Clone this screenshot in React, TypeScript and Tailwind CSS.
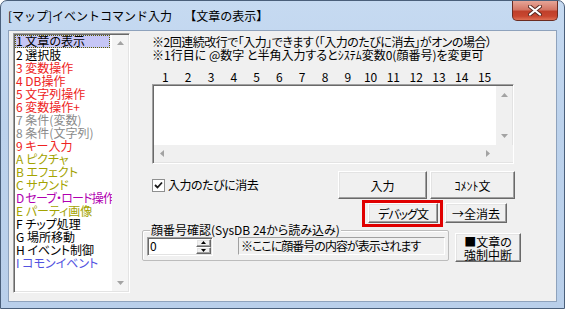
import React from "react";

const RED = "#ee2222";
const GRAY = "#8a8a8a";
const OLIVE = "#a3a300";
const PURPLE = "#b000b0";
const BLUE = "#5353df";

const items: [string, string][] = [
  ["1 文章の表示", "#000"],
  ["2 選択肢", "#000"],
  ["3 変数操作", RED],
  ["4 DB操作", RED],
  ["5 文字列操作", RED],
  ["6 変数操作+", RED],
  ["7 条件(変数)", GRAY],
  ["8 条件(文字列)", GRAY],
  ["9 キー入力", RED],
  ["A ピクチャ", OLIVE],
  ["B エフェクト", OLIVE],
  ["C サウンド", OLIVE],
  ["D セーブ・ロード操作", PURPLE],
  ["E パーティ画像", OLIVE],
  ["F チップ処理", "#000"],
  ["G 場所移動", "#000"],
  ["H イベント制御", "#000"],
  ["I コモンイベント", BLUE],
];

const Up = () => (
  <svg width="7" height="4" viewBox="0 0 7 4">
    <path d="M0 4 L3.5 0 L7 4 Z" fill="#a3a3a3" />
  </svg>
);
const Down = () => (
  <svg width="7" height="4" viewBox="0 0 7 4">
    <path d="M0 0 L3.5 4 L7 0 Z" fill="#a3a3a3" />
  </svg>
);
const Left = () => (
  <svg width="4" height="7" viewBox="0 0 4 7">
    <path d="M4 0 L0 3.5 L4 7 Z" fill="#a3a3a3" />
  </svg>
);
const Right = () => (
  <svg width="4" height="7" viewBox="0 0 4 7">
    <path d="M0 0 L4 3.5 L0 7 Z" fill="#a3a3a3" />
  </svg>
);

const sunken =
  "border border-t-[#a0a0a0] border-l-[#a0a0a0] border-r-[#ffffff] border-b-[#ffffff] shadow-[inset_1px_1px_0_#696969,inset_-1px_-1px_0_#e3e3e3]";
const btn =
  "flex items-center justify-center bg-[#f0f0f0] border border-t-[#ffffff] border-l-[#ffffff] border-r-[#696969] border-b-[#696969] shadow-[inset_-1px_-1px_0_#a0a0a0,inset_1px_1px_0_#e3e3e3] text-[12px] leading-[13px] text-black";

export default function App() {
  return (
    <div className="w-[565px] h-[309px] bg-white [font-family:'Noto_Sans_CJK_JP',sans-serif] [font-feature-settings:'palt']">
      <div className="w-[565px] h-[309px] rounded-t-[7px] border border-[#4a5f7a] bg-[linear-gradient(180deg,#c6daf1_0%,#bcd2ec_40%,#b9cfea_100%)] flex flex-col relative overflow-hidden">
        {/* title bar */}
        <div className="h-[29px] flex items-center pl-[7px] text-[12px] text-black whitespace-nowrap [font-feature-settings:normal]">
          <span>[マップ]イベントコマンド入力</span>
          <span className="ml-[12px]">【文章の表示】</span>
        </div>
        {/* close button */}
        <div className="absolute top-0 right-[6px] w-[46px] h-[20px] rounded-b-[5px] border border-t-0 border-[#6b2c22] bg-[linear-gradient(180deg,#e6a597_0%,#d47766_45%,#c0402b_55%,#c8462f_80%,#de7055_100%)] flex items-center justify-center">
          <svg width="14" height="11" viewBox="0 0 14 11">
            <path d="M2 1.5 L12 9.5 M12 1.5 L2 9.5" stroke="#5a2a22" strokeWidth="4" strokeLinecap="round" />
            <path d="M2 1.5 L12 9.5 M12 1.5 L2 9.5" stroke="#ffffff" strokeWidth="2.2" strokeLinecap="round" />
          </svg>
        </div>
        {/* client */}
        <div className="mx-[7px] h-[272px] border border-[#8ea2bc] bg-[#f0f0f0] flex flex-row">
          {/* listbox */}
          <div className={`ml-[4px] mt-[2px] w-[117px] h-[260px] bg-white flex flex-row ${sunken}`}>
            <div className="flex-1 pl-[1px] pt-[1px] overflow-hidden">
              {items.map(([t, c], i) => (
                <div
                  key={i}
                  className={
                    i === 0
                      ? "w-[95px] h-[13px] leading-[12px] text-[12px] whitespace-nowrap bg-[#c6c6f6] outline-1 outline-dotted outline-[#606000] -outline-offset-1 pl-[1px]"
                      : i === 12
                      ? "h-[13px] leading-[13px] text-[12px] whitespace-nowrap pl-[1px] tracking-[-0.8px]"
                      : "h-[13px] leading-[13px] text-[12px] whitespace-nowrap pl-[1px]"
                  }
                  style={{ color: c }}
                >
                  {t}
                </div>
              ))}
            </div>
            <div className="w-[16px] mr-[1px] my-[1px] bg-[#f4f4f4] flex flex-col items-center justify-between py-[6px]">
              <Up />
              <Down />
            </div>
          </div>
          {/* right column */}
          <div className="ml-[12px] flex-1 flex flex-col pt-[4px]">
            <div className="ml-[10px] text-[12px] leading-[13px] text-black whitespace-nowrap">
              <div className="tracking-[-0.5px]">※2回連続改行で「入力」できます（「入力のたびに消去」がオンの場合）</div>
              <div>※1行目に @数字 と半角入力するとｼｽﾃﾑ変数0(顔番号)を変更可</div>
            </div>
            <div className="ml-[12px] mt-[10px] h-[12px] flex flex-row text-[12px] leading-[12px] text-black">
              {Array.from({ length: 15 }, (_, i) => (
                <div key={i} className="w-[22.8px] text-center">
                  {i + 1}
                </div>
              ))}
            </div>
            <div className={`ml-[10px] mt-[1px] w-[362px] h-[80px] bg-white flex flex-col ${sunken}`}>
              <div className="flex-1 flex flex-row">
                <div className="flex-1" />
                <div className="w-[16px] mr-[1px] mt-[1px] bg-[#f0f0f0] flex flex-col items-center justify-between py-[7px]">
                  <Up />
                  <Down />
                </div>
              </div>
              <div className="h-[17px] ml-[1px] mb-[1px] flex flex-row">
                <div className="flex-1 bg-[#f0f0f0] flex flex-row items-center justify-between px-[6px]">
                  <Left />
                  <Right />
                </div>
                <div className="w-[17px] bg-[#f0f0f0]" />
              </div>
            </div>
            {/* row 1 */}
            <div className="mt-[7px] h-[28px] flex flex-row">
              <div className="w-[196px] pl-[10px] flex flex-row items-center">
                <div className="w-[13px] h-[13px] bg-white border border-[#8e8f8f] flex items-center justify-center">
                  <svg width="9" height="8" viewBox="0 0 9 8">
                    <path d="M1 4 L3.5 6.5 L8 1.5" stroke="#1a1a1a" strokeWidth="1.8" fill="none" />
                  </svg>
                </div>
                <span className="ml-[3px] text-[12px] text-black whitespace-nowrap tracking-[-0.5px]">入力のたびに消去</span>
              </div>
              <div className={`w-[89px] h-[28px] ${btn}`}>入力</div>
              <div className={`ml-[3px] w-[85px] h-[28px] ${btn}`}>ｺﾒﾝﾄ文</div>
            </div>
            {/* row 2 */}
            <div className="mt-[1px] h-[27px] flex flex-row">
              <div className="ml-[220px] w-[81px] h-[27px] border-[3px] border-[#e00000] pl-[3px] pr-[2px] pt-0">
                <div className={`w-[70px] h-[20px] tracking-[-1px] ${btn}`}>デバッグ文</div>
              </div>
              <div className={`ml-[2px] mt-[3px] w-[62px] h-[20px] ${btn}`}>→全消去</div>
            </div>
            {/* row 3 */}
            <div className="mt-[3px] flex flex-row">
              <div className="relative w-[307px] h-[31px] border border-[#bcbcbc] rounded-[2px] shadow-[inset_1px_1px_0_#ffffff] flex flex-row items-start pt-[6px] pl-[4px]">
                <span className="absolute left-[7px] top-[-8px] px-[1px] bg-[#f0f0f0] text-[12px] leading-[14px] text-black whitespace-nowrap">
                  顔番号確認(SysDB 24から読み込み)
                </span>
                <div className={`w-[66px] h-[19px] bg-white flex flex-row ${sunken}`}>
                  <div className="flex-1 pl-[2px] text-[12px] leading-[16px] text-black">0</div>
                  <div className="w-[17px] flex flex-col p-[1px]">
                    <div className={`flex-1 ${btn}`}>
                      <svg width="5" height="3" viewBox="0 0 5 3"><path d="M0 3 L2.5 0 L5 3 Z" fill="#000" /></svg>
                    </div>
                    <div className={`flex-1 ${btn}`}>
                      <svg width="5" height="3" viewBox="0 0 5 3"><path d="M0 0 L2.5 3 L5 0 Z" fill="#000" /></svg>
                    </div>
                  </div>
                </div>
                <div className="ml-[25px] w-[207px] h-[18px] border border-t-[#a0a0a0] border-l-[#a0a0a0] border-r-white border-b-white pl-[2px] text-[12px] leading-[15px] text-black whitespace-nowrap tracking-[-1px]">
                  ※ここに顔番号の内容が表示されます
                </div>
              </div>
              <div className={`ml-[6px] mt-[3px] w-[66px] h-[29px] flex-col ${btn}`}>
                <div>■文章の</div>
                <div>強制中断</div>
              </div>
            </div>
          </div>
        </div>
      </div>
    </div>
  );
}
